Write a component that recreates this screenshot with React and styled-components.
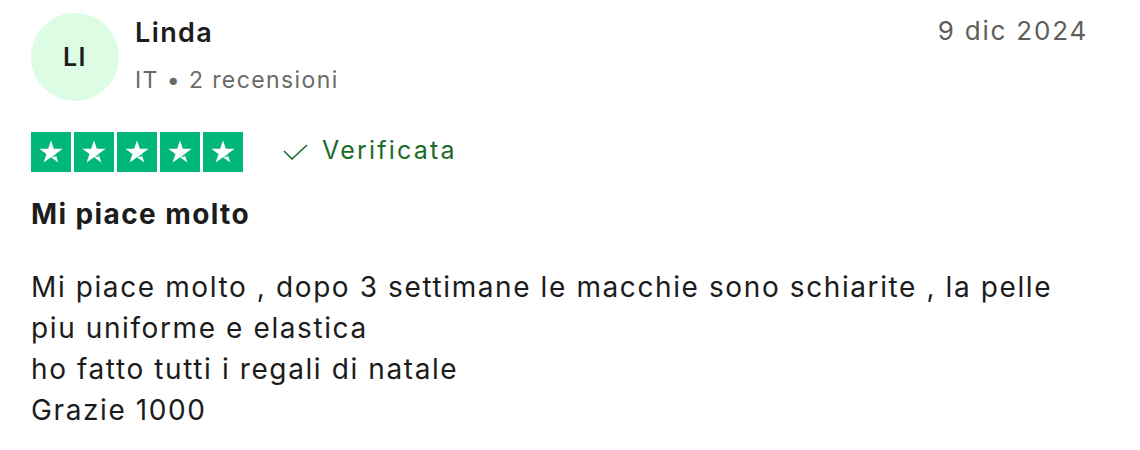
import React from 'react'
import styled, { createGlobalStyle } from 'styled-components'

const GlobalStyle = createGlobalStyle`
  body {
    margin: 0;
    background: #fff;
    font-family: Inter, 'Liberation Sans', sans-serif;
    color: #1c1c1c;
  }
`

const Card = styled.article`
  width: 1140px;
  height: 450px;
  box-sizing: border-box;
  padding: 13px 52px 0 31px;
`

const Header = styled.header`
  display: flex;
  align-items: flex-start;
  justify-content: space-between;
`

const Consumer = styled.div`
  display: flex;
  align-items: flex-start;
  gap: 16px;
`

const Avatar = styled.div`
  width: 88px;
  height: 88px;
  border-radius: 50%;
  background: #dcfce4;
  display: flex;
  align-items: center;
  justify-content: center;
  font-size: 25px;
  font-weight: 600;
  letter-spacing: 1.5px;
  color: #1c1c1c;
`

const Info = styled.div`
  display: flex;
  flex-direction: column;
  gap: 15px;
  margin-top: 3px;
`

const Name = styled.span`
  font-size: 27px;
  font-weight: 600;
  line-height: 34px;
  letter-spacing: 1.4px;
`

const Meta = styled.span`
  font-size: 23px;
  line-height: 30px;
  letter-spacing: 1.4px;
  color: #6b6a66;
`

const DateText = styled.time`
  font-size: 26px;
  line-height: 34px;
  letter-spacing: 1.8px;
  color: #5f5e5a;
  margin-top: 1px;
`

const RatingRow = styled.div`
  display: flex;
  align-items: center;
  gap: 40px;
  margin-top: 31px;
  height: 40px;
`

const Stars = styled.div`
  display: flex;
  gap: 3px;
`

const StarBox = styled.div`
  width: 40px;
  height: 40px;
  background: #00b67a;
  display: flex;
  align-items: center;
  justify-content: center;
`

const Verified = styled.div`
  display: flex;
  align-items: center;
  gap: 14px;
  color: #1c6b2b;
`

const VerifiedLabel = styled.span`
  font-size: 25px;
  line-height: 30px;
  letter-spacing: 2.2px;
  margin-bottom: 4px;
`

const Title = styled.h2`
  margin: 25px 0 0;
  font-size: 28px;
  font-weight: 700;
  line-height: 34px;
  letter-spacing: 1.4px;
`

const Body = styled.p`
  margin: 36px 0 0;
  font-size: 28px;
  line-height: 41px;
  letter-spacing: 1.6px;
  white-space: pre-line;
  max-width: 1045px;
`

function Star() {
  return (
    <StarBox>
      <svg width="32" height="32" viewBox="0 0 24 24">
        <path
          fill="#fff"
          d="M12 3.2l2.1 6.4h6.7l-5.4 3.9 2.1 6.4L12 15.9l-5.5 4 2.1-6.4-5.4-3.9h6.7z"
        />
        <path fill="#00b67a" d="M15.4 13.5l0.6 1.9-3.6 0.6z" opacity="0.85" />
      </svg>
    </StarBox>
  )
}

const review = `Mi piace molto , dopo 3 settimane le macchie sono schiarite , la pelle piu uniforme e elastica
ho fatto tutti i regali di natale
Grazie 1000`

export default function App() {
  return (
    <>
      <GlobalStyle />
      <Card>
        <Header>
          <Consumer>
            <Avatar>LI</Avatar>
            <Info>
              <Name>Linda</Name>
              <Meta>IT • 2 recensioni</Meta>
            </Info>
          </Consumer>
          <DateText>9 dic 2024</DateText>
        </Header>
        <RatingRow>
          <Stars>
            {[0, 1, 2, 3, 4].map(i => <Star key={i} />)}
          </Stars>
          <Verified>
            <svg width="25" height="16" viewBox="0 0 25 16">
              <path d="M1 7l8 8L24 1" fill="none" stroke="#1c6b2b" strokeWidth="1.6" />
            </svg>
            <VerifiedLabel>Verificata</VerifiedLabel>
          </Verified>
        </RatingRow>
        <Title>Mi piace molto</Title>
        <Body>{review}</Body>
      </Card>
    </>
  )
}
